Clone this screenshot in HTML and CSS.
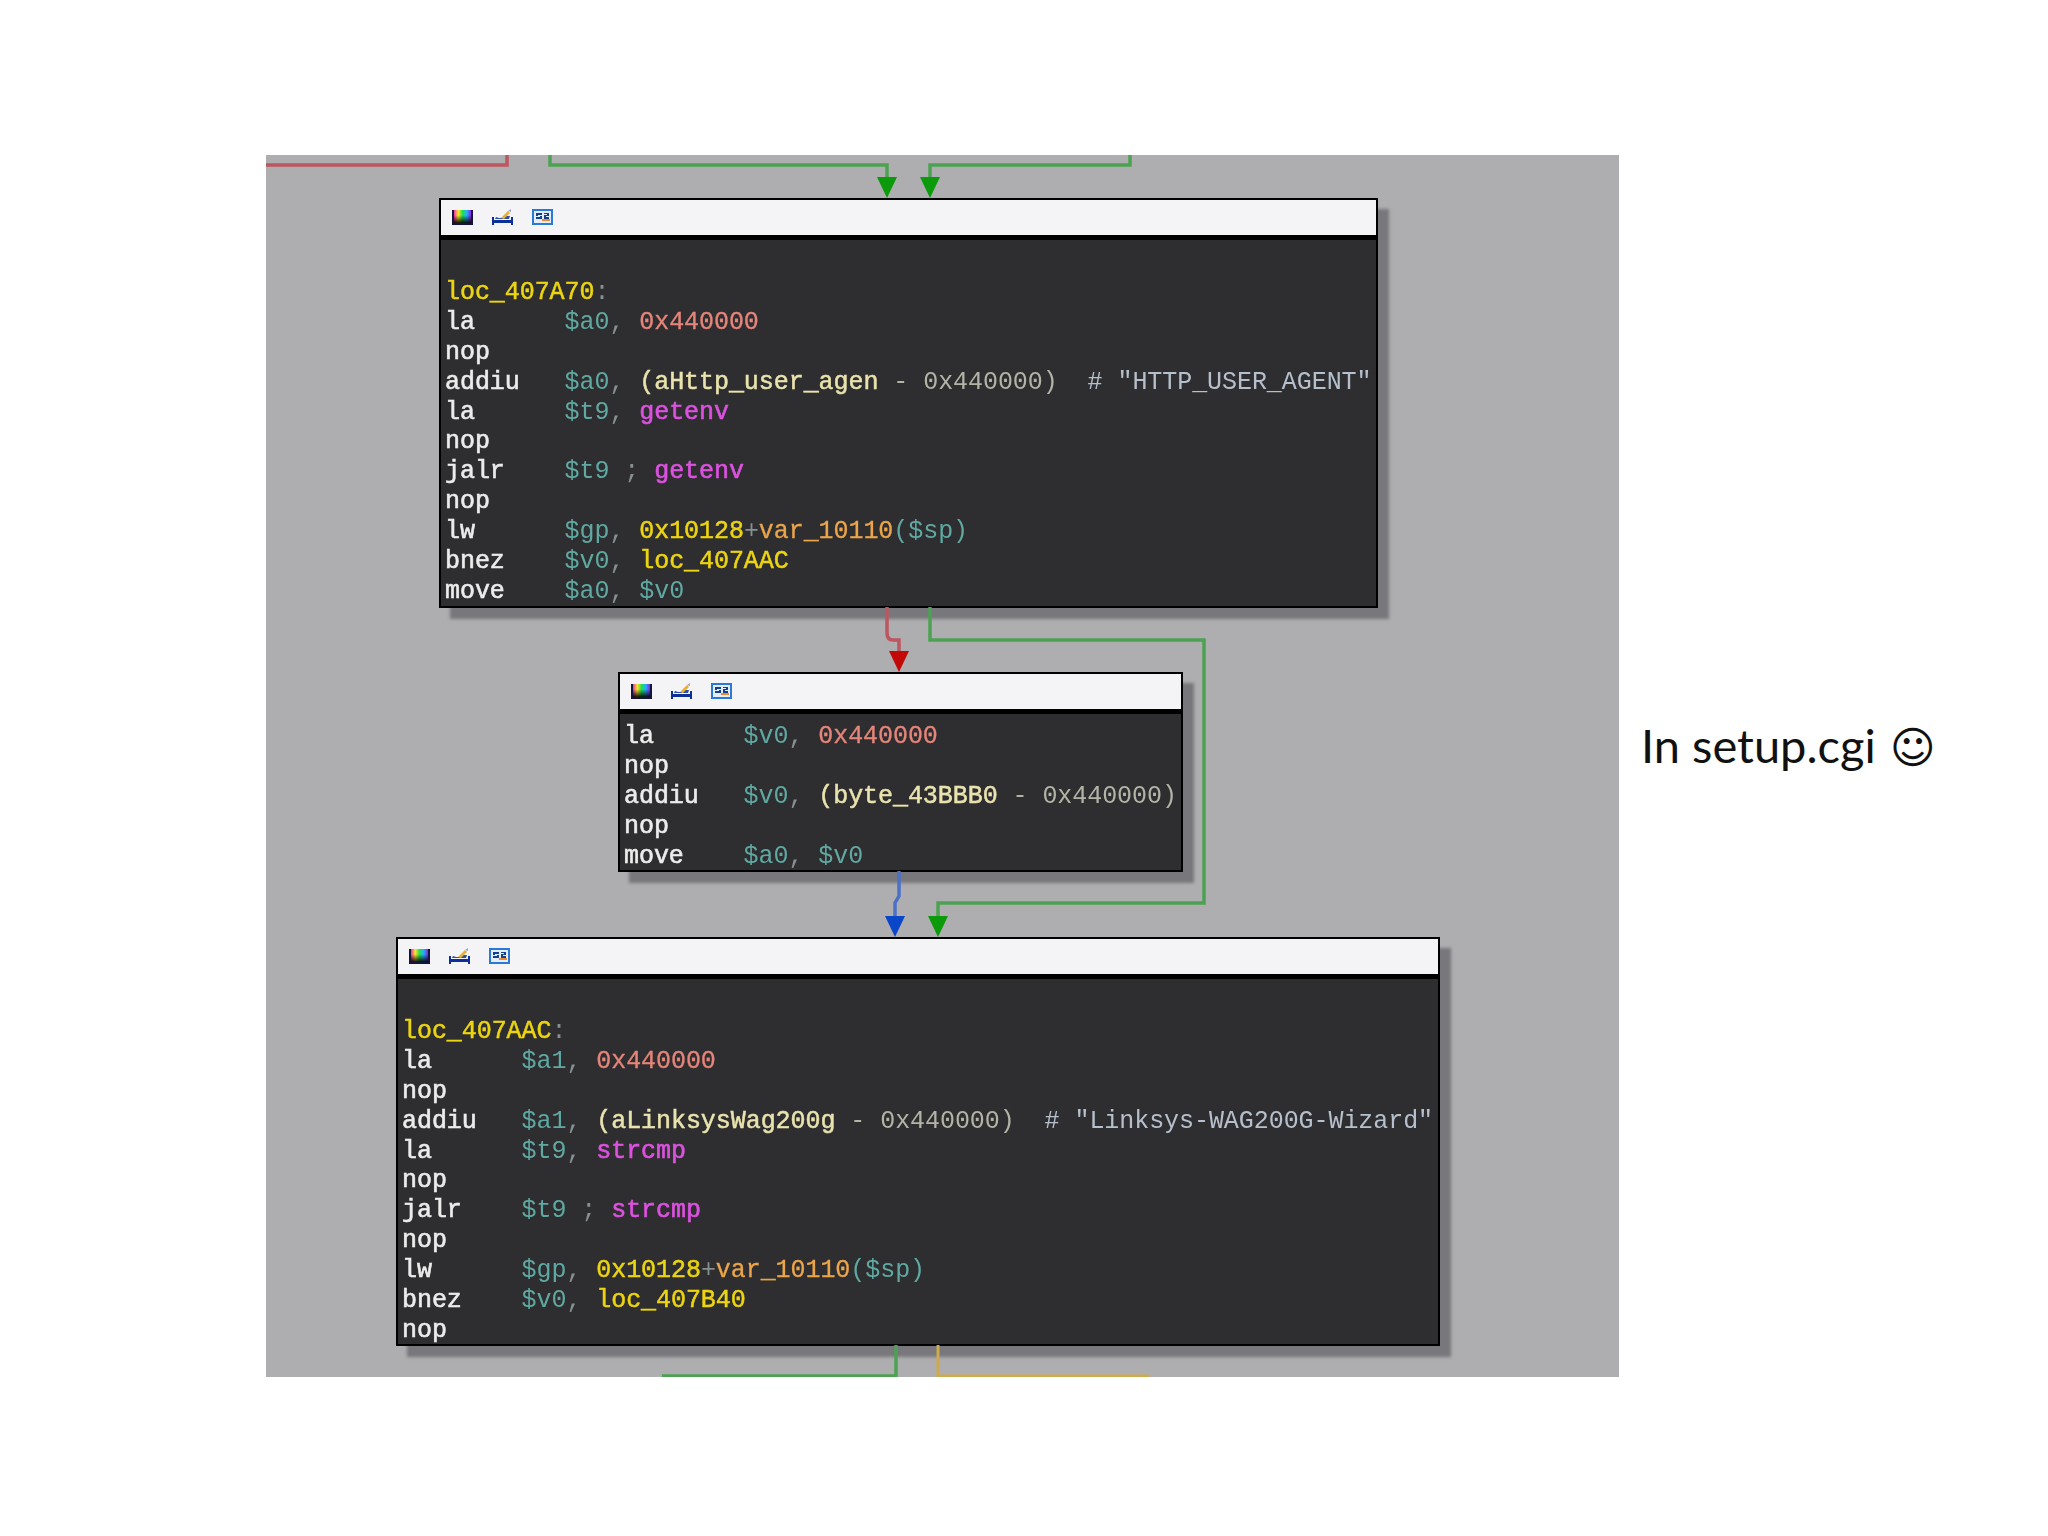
FILE: index.html
```html
<!DOCTYPE html>
<html lang="en">
<head>
<meta charset="utf-8">
<title>In setup.cgi</title>
<link rel="stylesheet" href="styles.css">
</head>
<body>
<main class="slide">
  <section class="graph">
    <svg class="edges" viewBox="266 155 1353 1222" width="1353" height="1222">
      <g class="edge red"><path d="M266 165H507V155"/><path d="M887 607V633Q887 640 893 640H899V655"/></g>
      <g class="edge green"><path d="M550 155V165H887V180"/><path d="M1130 155V165H930V180"/><path d="M930 607V640H1204V903H938V918"/><path d="M896 1345V1376H662"/></g>
      <g class="edge blue"><path d="M899 871V896L895 903V918"/></g>
      <g class="edge yellow"><path d="M938 1345V1376H1149"/></g>
      <path class="arrow green-fill" d="M877 177H897L887 198Z"/>
      <path class="arrow green-fill" d="M920 177H940L930 198Z"/>
      <path class="arrow red-fill" d="M889 651H909L899 672Z"/>
      <path class="arrow blue-fill" d="M885 916H905L895 937Z"/>
      <path class="arrow green-fill" d="M928 916H948L938 937Z"/>
    </svg>

    <article class="node node-a">
      <header class="node-head">
        <svg class="ico" viewBox="0 0 21 16"><use href="#i-palette"/></svg>
        <svg class="ico" viewBox="0 0 21 16"><use href="#i-graph"/></svg>
        <svg class="ico" viewBox="0 0 21 16"><use href="#i-code"/></svg>
      </header>
<pre class="code">

<span class="lbl">loc_407A70</span><span class="pun">:</span>
<span class="op">la      </span><span class="reg">$a0</span><span class="pun">, </span><span class="num">0x440000</span>
<span class="op">nop</span>
<span class="op">addiu   </span><span class="reg">$a0</span><span class="pun">, </span><span class="dat">(aHttp_user_agen</span><span class="off"> - 0x440000)</span><span class="cmt">  # "HTTP_USER_AGENT"</span>
<span class="op">la      </span><span class="reg">$t9</span><span class="pun">, </span><span class="fn">getenv</span>
<span class="op">nop</span>
<span class="op">jalr    </span><span class="reg">$t9</span><span class="pun"> ; </span><span class="fn">getenv</span>
<span class="op">nop</span>
<span class="op">lw      </span><span class="reg">$gp</span><span class="pun">, </span><span class="lbl">0x10128</span><span class="pun">+</span><span class="var">var_10110</span><span class="reg">($sp)</span>
<span class="op">bnez    </span><span class="reg">$v0</span><span class="pun">, </span><span class="lbl">loc_407AAC</span>
<span class="op">move    </span><span class="reg">$a0</span><span class="pun">, </span><span class="reg">$v0</span></pre>
    </article>

    <article class="node node-b">
      <header class="node-head">
        <svg class="ico" viewBox="0 0 21 16"><use href="#i-palette"/></svg>
        <svg class="ico" viewBox="0 0 21 16"><use href="#i-graph"/></svg>
        <svg class="ico" viewBox="0 0 21 16"><use href="#i-code"/></svg>
      </header>
<pre class="code"><span class="op">la      </span><span class="reg">$v0</span><span class="pun">, </span><span class="num">0x440000</span>
<span class="op">nop</span>
<span class="op">addiu   </span><span class="reg">$v0</span><span class="pun">, </span><span class="dat">(byte_43BBB0</span><span class="off"> - 0x440000)</span>
<span class="op">nop</span>
<span class="op">move    </span><span class="reg">$a0</span><span class="pun">, </span><span class="reg">$v0</span></pre>
    </article>

    <article class="node node-c">
      <header class="node-head">
        <svg class="ico" viewBox="0 0 21 16"><use href="#i-palette"/></svg>
        <svg class="ico" viewBox="0 0 21 16"><use href="#i-graph"/></svg>
        <svg class="ico" viewBox="0 0 21 16"><use href="#i-code"/></svg>
      </header>
<pre class="code">

<span class="lbl">loc_407AAC</span><span class="pun">:</span>
<span class="op">la      </span><span class="reg">$a1</span><span class="pun">, </span><span class="num">0x440000</span>
<span class="op">nop</span>
<span class="op">addiu   </span><span class="reg">$a1</span><span class="pun">, </span><span class="dat">(aLinksysWag200g</span><span class="off"> - 0x440000)</span><span class="cmt">  # "Linksys-WAG200G-Wizard"</span>
<span class="op">la      </span><span class="reg">$t9</span><span class="pun">, </span><span class="fn">strcmp</span>
<span class="op">nop</span>
<span class="op">jalr    </span><span class="reg">$t9</span><span class="pun"> ; </span><span class="fn">strcmp</span>
<span class="op">nop</span>
<span class="op">lw      </span><span class="reg">$gp</span><span class="pun">, </span><span class="lbl">0x10128</span><span class="pun">+</span><span class="var">var_10110</span><span class="reg">($sp)</span>
<span class="op">bnez    </span><span class="reg">$v0</span><span class="pun">, </span><span class="lbl">loc_407B40</span>
<span class="op">nop</span></pre>
    </article>
  </section>

  <p class="caption">In setup.cgi <span class="smile">☺</span></p>
</main>

<svg class="defs" width="0" height="0" aria-hidden="true">
  <defs>
    <linearGradient id="spec" x1="0" x2="1" y1="0" y2="0">
      <stop offset="0" stop-color="#f030b0"/><stop offset=".25" stop-color="#ffe820"/><stop offset=".5" stop-color="#20e050"/><stop offset=".75" stop-color="#20b0ff"/><stop offset="1" stop-color="#9020e0"/>
    </linearGradient>
    <linearGradient id="fade" x1="0" x2="0" y1="0" y2="1">
      <stop offset=".4" stop-color="#000" stop-opacity="0"/><stop offset="1" stop-color="#000" stop-opacity=".9"/>
    </linearGradient>
    <symbol id="i-palette" viewBox="0 0 21 16">
      <rect x="0" y="1" width="21" height="15" fill="#14143c"/>
      <rect x="2" y="1" width="17" height="13" fill="url(#spec)"/>
      <rect x="2" y="1" width="17" height="13" fill="url(#fade)"/>
    </symbol>
    <symbol id="i-graph" viewBox="0 0 21 16">
      <path d="M0 8h2v3h17V8h2v8h-2v-2H2v2H0z" fill="#0d2f9a"/>
      <path d="M3 10h14l1-3h-4l-3 2H7l-3-1z" fill="#2a4fb0"/>
      <path d="M9 9l7-7 2 2-6 6z" fill="#e8b030"/>
      <path d="M16 2l3-2v3z" fill="#9aa6c0"/>
    </symbol>
    <symbol id="i-code" viewBox="0 0 21 16">
      <rect x="0" y="0" width="21" height="16" fill="#2a78d8"/>
      <rect x="2" y="2" width="17" height="12" fill="#e4eefa"/>
      <path d="M4 4h6v2H6v1h4v3H4V8h4V7H4zM12 4h5v3h-3v1h3v2h-5V6h3V5h-3z" fill="#12408f"/>
      <rect x="10" y="10" width="8" height="2" fill="#f08830"/>
    </symbol>
  </defs>
</svg>
</body>
</html>
```
FILE: styles.css
```css
html, body {
  margin: 0;
  background: #fff;
}

.slide {
  display: flex;
  align-items: flex-start;
  width: 2048px;
  height: 1536px;
  box-sizing: border-box;
  padding: 155px 0 0 266px;
}

.graph {
  position: relative;
  flex: none;
  width: 1353px;
  height: 1222px;
  background: #aeadaf;
  overflow: hidden;
}

.edges {
  position: absolute;
  inset: 0;
  z-index: 1;
}

.edge path {
  fill: none;
  stroke-width: 3.5;
}
.edge.red path { stroke: #bd5660; }
.edge.green path { stroke: #4ca252; }
.edge.blue path { stroke: #4a70c8; }
.edge.yellow path { stroke: #cfa94a; stroke-width: 3; }
.red-fill { fill: #c30808; }
.green-fill { fill: #0a9a0a; }
.blue-fill { fill: #0a46c8; }

.node {
  position: absolute;
  display: flex;
  flex-direction: column;
  box-sizing: border-box;
  background: #2e2d30;
  border: 2px solid #000;
  box-shadow: 11px 11px 3px #78777b;
}
.node-a { left: 173px; top: 43px; width: 939px; height: 410px; }
.node-b { left: 352px; top: 517px; width: 565px; height: 200px; }
.node-c { left: 130px; top: 782px; width: 1044px; height: 409px; }

.node-head {
  display: flex;
  align-items: center;
  gap: 19px;
  flex: none;
  height: 35px;
  padding: 0 0 1px 11px;
  box-sizing: border-box;
  background: #f4f4f6;
  box-shadow: 0 5px 0 #000;
}

.ico {
  width: 21px;
  height: 16px;
  flex: none;
}

.code {
  margin: 0;
  padding: 13px 0 0 4px;
  font-family: "Liberation Mono", monospace;
  font-size: 25px;
  font-weight: 400;
  line-height: 29.9px;
  letter-spacing: -0.06px;
  color: #e8e8e8;
  white-space: pre;
  filter: blur(0.45px);
}

.op { color: #ececec; -webkit-text-stroke: 0.6px #ececec; }
.reg { color: #5fa9a2; }
.pun { color: #87908f; }
.num { color: #e6857a; -webkit-text-stroke: 0.3px #e6857a; }
.lbl { color: #ecd511; -webkit-text-stroke: 0.5px #ecd511; }
.fn { color: #dc52df; -webkit-text-stroke: 0.6px #dc52df; }
.dat { color: #e9e3ae; -webkit-text-stroke: 0.5px #e9e3ae; }
.off { color: #b3b3a6; }
.cmt { color: #b6c0cc; }
.var { color: #eba54a; -webkit-text-stroke: 0.3px #eba54a; }

.caption {
  margin: 562px 0 0 22px;
  font-family: Lato, "Open Sans", sans-serif;
  font-size: 47px;
  line-height: 56px;
  color: #111;
  white-space: nowrap;
}

.smile {
  font-family: "DejaVu Sans", sans-serif;
  font-size: 44px;
  margin-left: 2px;
}

.defs {
  position: absolute;
}
```
